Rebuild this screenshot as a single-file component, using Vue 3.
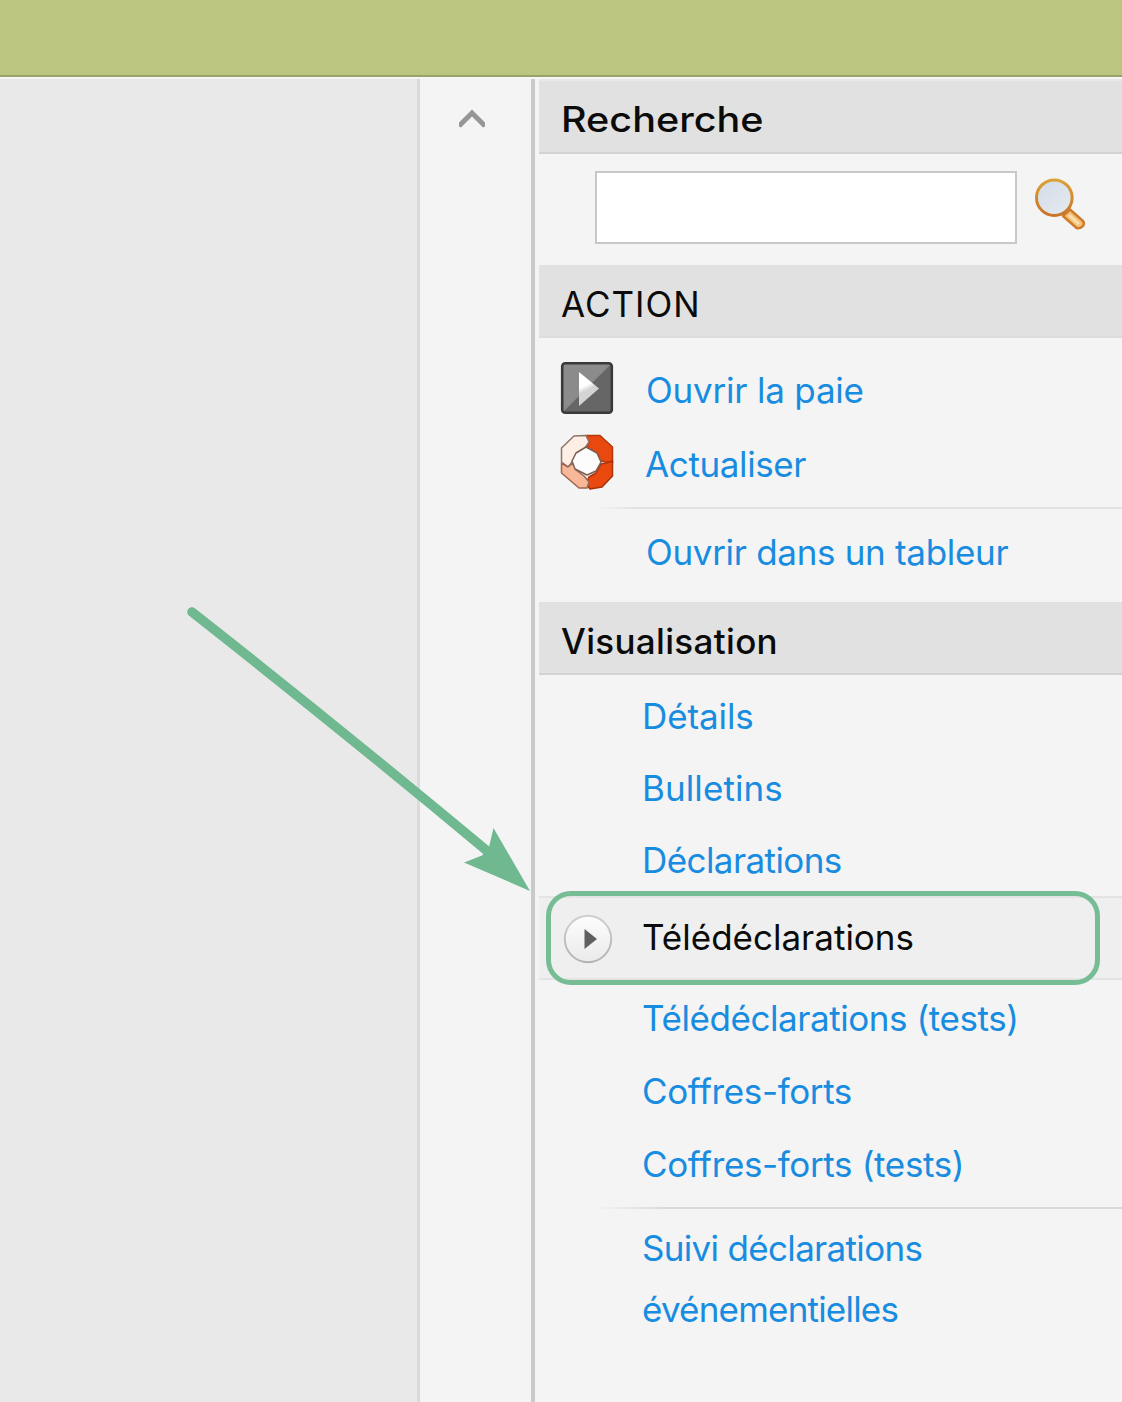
<script setup>
const views = [
  { label: 'Détails', spacing: -0.1 },
  { label: 'Bulletins', spacing: 0.1 },
  { label: 'Déclarations', spacing: -0.58 },
]
const moreViews = [
  { label: 'Télédéclarations (tests)', spacing: -0.43 },
  { label: 'Coffres-forts', spacing: -0.38 },
  { label: 'Coffres-forts (tests)', spacing: -0.36 },
]
</script>

<template>
  <div class="page">
    <header class="topbar"></header>
    <div class="columns">
      <div class="workspace"></div>
      <div class="gutter">
        <svg class="chevron" width="30" height="24" viewBox="0 0 30 24">
          <path d="M2 19.5V15.5L15 2.500L28 15.5V19.5L26 20.500L15 9.500L4 20.500Z" fill="#969696" />
        </svg>
      </div>
      <aside class="sidebar">
        <h2 class="heading first"><span class="wide">Recherche</span></h2>
        <div class="search">
          <input type="text" aria-label="Recherche" />
          <svg width="54" height="54" viewBox="0 0 54 54">
            <defs>
              <linearGradient id="ring" x1="0" y1="0" x2="0" y2="1">
                <stop offset="0" stop-color="#dba235" />
                <stop offset="1" stop-color="#c8752a" />
              </linearGradient>
              <linearGradient id="lens" x1="0" y1="0" x2="1" y2="1">
                <stop offset="0" stop-color="#d3dbe6" />
                <stop offset="1" stop-color="#e6ebf1" />
              </linearGradient>
            </defs>
            <path d="M30 39L37 32.5L50 44Q52 47 49.500 49.500Q46.500 52 43.500 51Z" fill="#f2c27c" stroke="#cf7b2b" stroke-width="2.400" stroke-linejoin="round" />
            <path d="M36 38L46 47" stroke="#fbdfa9" stroke-width="3" />
            <circle cx="21.300" cy="20.700" r="17.800" fill="url(#lens)" stroke="url(#ring)" stroke-width="3" />
          </svg>
        </div>

        <h2 class="heading plain"><span style="letter-spacing: 1px">ACTION</span></h2>
        <nav class="actions">
          <a class="row">
            <svg class="icon" width="54" height="54" viewBox="0 0 54 54">
              <defs>
                <linearGradient id="arrow" x1="0" y1="0" x2="0.300" y2="1">
                  <stop offset="0.45" stop-color="#ffffff" />
                  <stop offset="0.6" stop-color="#d4d4d4" />
                </linearGradient>
              </defs>
              <rect x="2" y="2" width="50" height="50" rx="3" fill="#666" />
              <path d="M3 3H51L3 51Z" fill="#8b8b8b" />
              <rect x="2.200" y="2.200" width="49.600" height="49.600" rx="3" fill="none" stroke="#3a3a3a" stroke-width="2.600" />
              <path d="M19 11V45L39 27.500Z" fill="url(#arrow)" />
            </svg>
            <span style="letter-spacing: -0.2px">Ouvrir la paie</span>
          </a>
          <a class="row refresh">
            <svg class="icon" width="54" height="56" viewBox="0 0 54 56">
              <g stroke-width="1.500" stroke-linejoin="round">
                <path d="M26 1.500H40L52.500 13V29L40.500 27L37 19L27 14L29 8Z" fill="#e9480f" stroke="#b5380b" />
                <path d="M52.500 27L52.500 42L42 53L30 55L26 49L29 43L36 39L41 30L46 29Z" fill="#e9480f" stroke="#a8320a" />
                <path d="M26 1.500L29 8L25 14L16 20L13 27L8 33L1.500 28V14L14 2Z" fill="#fdeee6" stroke="#8f7468" />
                <path d="M1.500 29L8 33L13 29L16 36L24 42L29 48L27 54H19L1.500 39Z" fill="#f8b797" stroke="#9b6652" />
                <path d="M26 13L37 19L41 28L36 37L27 41L15 35L12 27L16 19Z" fill="#fcfcfc" stroke="#7a5f52" />
              </g>
            </svg>
            <span style="letter-spacing: -0.38px">Actualiser</span>
          </a>
          <hr />
          <a class="row sheet"><span style="letter-spacing: -0.31px">Ouvrir dans un tableur</span></a>
        </nav>

        <h2 class="heading visual"><span style="letter-spacing: 0.33px">Visualisation</span></h2>
        <nav class="views">
          <a v-for="v in views" :key="v.label" class="view" :style="{ letterSpacing: v.spacing + 'px' }">{{ v.label }}</a>
          <a class="view selected">
            <svg class="bullet" width="52" height="52" viewBox="0 0 52 52">
              <defs>
                <linearGradient id="disc" x1="0" y1="0" x2="0" y2="1">
                  <stop offset="0" stop-color="#fdfdfd" />
                  <stop offset="1" stop-color="#eaeaea" />
                </linearGradient>
                <linearGradient id="rim" x1="0" y1="0" x2="0" y2="1">
                  <stop offset="0" stop-color="#d0d0d0" />
                  <stop offset="1" stop-color="#b2b2b2" />
                </linearGradient>
              </defs>
              <circle cx="26" cy="26" r="23.200" fill="url(#disc)" stroke="url(#rim)" stroke-width="2" />
              <path d="M22.500 16V36L35 26Z" fill="#5f5f5f" />
            </svg>
            Télédéclarations
            <span class="outline"></span>
          </a>
          <a v-for="v in moreViews" :key="v.label" class="view tall" :style="{ letterSpacing: v.spacing + 'px' }">{{ v.label }}</a>
          <hr class="strong" />
          <a class="events">
            <span style="letter-spacing: -0.68px">Suivi déclarations</span><br />
            <span style="letter-spacing: -0.8px">événementielles</span>
          </a>
        </nav>
      </aside>
    </div>
    <svg class="pointer" width="350" height="292" viewBox="0 0 350 292">
      <path d="M7 7Q157 125 304 247.500" fill="none" stroke="#70b990" stroke-width="9.500" stroke-linecap="round" />
      <path d="M345 286L279 257.500L297 250.500L304 242L308.500 223Z" fill="#70b990" />
    </svg>
  </div>
</template>

<style>
body {
  margin: 0;
}
</style>

<style scoped>
.page {
  position: relative;
  display: flex;
  flex-direction: column;
  width: 1122px;
  height: 1402px;
  overflow: hidden;
  background: #f4f4f4;
  font: 400 35px/72px Inter, "Liberation Sans", sans-serif;
  color: #0b0b0b;
}
.topbar {
  box-sizing: border-box;
  height: 77px;
  flex: none;
  background: #bbc580;
  border-bottom: 2px solid #99a268;
}
.columns {
  display: flex;
  flex: 1;
  border-top: 2px solid #f6f6f6;
}
.workspace {
  width: 417px;
  background: #e9e9e9;
  border-right: 3px solid #dadada;
}
.gutter {
  width: 111px;
  border-right: 4px solid #cacaca;
}
.chevron {
  display: block;
  margin: 28px 0 0 37px;
}
.sidebar {
  flex: 1;
  padding-left: 4px;
}
.heading {
  box-sizing: border-box;
  height: 73px;
  margin: 0;
  padding: 3px 0 0 22px;
  background: #e1e1e1;
  border-bottom: 2px solid #d3d3d3;
  font-size: 35px;
  font-weight: 500;
  line-height: 72px;
}
.heading.first {
  height: 75px;
  padding-top: 2px;
  border-top: 2px solid #e8e8e8;
}
.wide {
  display: inline-block;
  transform: scaleX(1.13);
  transform-origin: 0 0;
}
.heading.plain {
  font-weight: 400;
  border-bottom-color: #dcdcdc;
}
.search {
  display: flex;
  height: 94px;
  padding: 17px 0 0 56px;
}
.search input {
  box-sizing: border-box;
  width: 422px;
  height: 73px;
  padding: 0 12px;
  background: #fff;
  border: 2px solid #c8c8c8;
  border-radius: 0;
  font: inherit;
}
.search svg {
  margin: 6px 0 0 16px;
}
.actions {
  height: 250px;
  padding-top: 14px;
  color: #188ce0;
}
.row {
  display: flex;
  align-items: center;
  height: 74px;
  line-height: 74px;
  padding-left: 21px;
}
.row span {
  padding-top: 1px;
}
.icon {
  flex: none;
  margin: -2px 32px 0 0;
}
.refresh span {
  margin-left: -1px;
}
.refresh .icon {
  margin-top: -3px;
}
hr {
  height: 2px;
  margin: 7px 0 0 56px;
  border: 0;
  background: linear-gradient(90deg, #f4f4f4, #e2e2e2 40px);
}
hr.strong {
  margin-top: 6px;
  background: linear-gradient(90deg, #f4f4f4, #dadada 70px);
}
.sheet {
  height: 85px;
  padding-left: 107px;
}
.sheet span {
  padding-top: 0;
}
.views {
  padding-top: 5px;
  color: #188ce0;
}
.view {
  display: block;
  height: 72px;
  padding-left: 103px;
}
.view.selected {
  position: relative;
  display: flex;
  align-items: center;
  box-sizing: border-box;
  height: 84px;
  margin-bottom: 2px;
  padding: 0 0 2px 23px;
  background: #efefef;
  border-top: 2px solid #e4e4e4;
  border-bottom: 2px solid #e4e4e4;
  color: #0b0b0b;
}
.bullet {
  margin: 4px 28px 0 0;
}
.outline {
  position: absolute;
  box-sizing: border-box;
  left: 7px;
  top: -7px;
  width: 554px;
  height: 94px;
  border: 5px solid #76bd96;
  border-radius: 25px;
}
.view.tall {
  height: 73px;
  line-height: 73px;
}
.events {
  display: block;
  padding: 9px 0 0 103px;
  line-height: 60.5px;
}
.pointer {
  position: absolute;
  left: 185px;
  top: 605px;
}
</style>
